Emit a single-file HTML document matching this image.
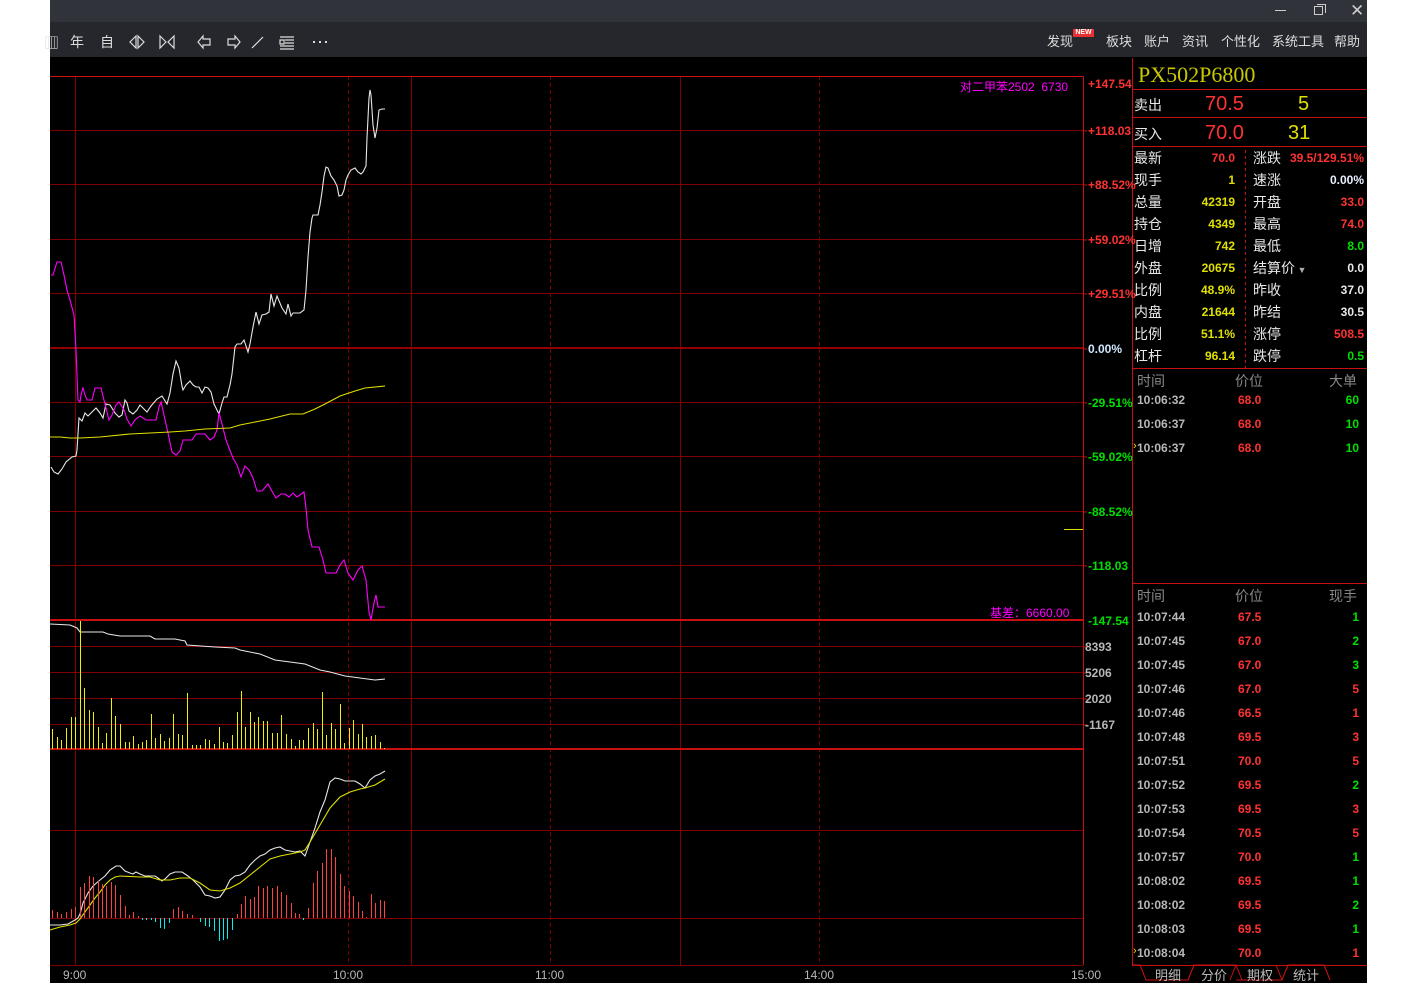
<!DOCTYPE html>
<html><head><meta charset="utf-8"><style>
*{margin:0;padding:0;box-sizing:border-box}
body{width:1416px;height:986px;background:#fff;position:relative;overflow:hidden;font-family:"Liberation Sans","Noto Sans CJK SC",sans-serif}
.a{position:absolute;white-space:nowrap}
.cn{font-family:"Liberation Sans","Noto Sans CJK SC",sans-serif;font-size:14px;color:#e8e8e8}
.b{font-weight:bold;font-size:12px}
.r{color:#ff3232}.y{color:#e0e000}.g{color:#00e000}.w{color:#e8e8e8}.gr{color:#b8b8b8}
</style></head><body>
<div class="a" style="left:50px;top:0;width:1317px;height:22px;background:#303339"></div>
<div class="a" style="left:50px;top:22px;width:1317px;height:35px;background:#25272c"></div>
<div class="a" style="left:50px;top:57px;width:1317px;height:926px;background:#000"></div>
<div class="a" style="left:1275px;top:10px;width:11px;height:1px;background:#ccc"></div>
<div class="a" style="left:1314px;top:6px;width:9px;height:9px;border:1px solid #ccc"></div>
<div class="a" style="left:1317px;top:4px;width:9px;height:9px;border-top:1px solid #ccc;border-right:1px solid #ccc"></div>
<div class="a" style="left:1350px;top:1px;font-size:17px;color:#ccc">✕</div>
<div class="a" style="left:44px;top:32px;font-size:15px;color:#ddd;font-family:'Noto Sans CJK SC',sans-serif">▥</div>
<div class="a cn" style="left:70px;top:32px;color:#ddd">年</div>
<div class="a cn" style="left:100px;top:32px;color:#ddd">自</div>
<svg class="a" style="left:128px;top:33px" width="210" height="18" fill="none" stroke="#ddd" stroke-width="1.2">
<path d="M8 3 L2 9 L8 15 Z M10 3 L16 9 L10 15 Z"/>
<path d="M32 3 L38 9 L32 15 Z M46 3 L40 9 L46 15 Z"/>
<path d="M70 9 L75 3 L75 6 L82 6 L82 12 L75 12 L75 15 Z"/>
<path d="M112 9 L107 3 L107 6 L100 6 L100 12 L107 12 L107 15 Z"/>
<path d="M124 15 L135 4"/>
<path d="M152 4 H166 M157 7 H166 M157 10 H166 M152 13 H166 M152 16 H166 M152 7 H156 V11 H152 Z"/>
<path d="M185 9 h2 M191 9 h2 M197 9 h2" stroke-width="2"/>
</svg>
<div class="a cn" style="left:1047px;top:31px;font-size:13px;color:#ddd">发现</div>
<div class="a" style="left:1073px;top:29px;width:21px;height:8px;background:#e83030;color:#fff;font-size:7px;font-weight:bold;line-height:8px;text-align:center">NEW</div>
<div class="a cn" style="left:1106px;top:31px;font-size:13px;color:#ddd">板块</div>
<div class="a cn" style="left:1144px;top:31px;font-size:13px;color:#ddd">账户</div>
<div class="a cn" style="left:1182px;top:31px;font-size:13px;color:#ddd">资讯</div>
<div class="a cn" style="left:1221px;top:31px;font-size:13px;color:#ddd">个性化</div>
<div class="a cn" style="left:1272px;top:31px;font-size:13px;color:#ddd">系统工具</div>
<div class="a cn" style="left:1334px;top:31px;font-size:13px;color:#ddd">帮助</div>

<svg class="a" style="left:0;top:0" width="1416" height="986" shape-rendering="crispEdges">
<g stroke="#800000" stroke-width="1">
<path d="M50 130.5H1083M50 184.5H1083M50 239.5H1083M50 293.5H1083M50 402.5H1083M50 456.5H1083M50 511.5H1083M50 565.5H1083M50 646.5H1083M50 672.5H1083M50 698.5H1083M50 724.5H1083M50 830.5H1083M50 918.5H1083M50 965.5H1083"/>
<path d="M75.5 76V965M411.5 76V965M680.5 76V965"/>
<path d="M348.5 76V965M550.5 76V965M819.5 76V965" stroke-dasharray="4,3"/>
</g>
<path d="M50 348H1083" stroke="#900000" stroke-width="2"/>
<path d="M50 76.5H1083" stroke="#d01010"/>
<path d="M50 620H1083M50 749H1083" stroke="#c81010" stroke-width="2"/>
<path d="M1083.5 76V965M1132.5 58V965M1132 89.5H1367M1132 117.5H1367M1132 146.5H1367M1132 368.5H1367M1132 583.5H1367M1132 965.5H1367" stroke="#c81010"/>
<path d="M1245.5 150V368" stroke="#c81010" stroke-dasharray="3,3"/>
<path d="M1064 529.5H1083" stroke="#e0e000"/>
<g stroke="#c81010"><path d="M1083 131h4M1083 185h4M1083 240h4M1083 294h4M1083 349h4M1083 403h4M1083 457h4M1083 512h4M1083 566h4M1083 647h4M1083 673h4M1083 699h4M1083 725h4"/></g>
<path d="M1132 965 L1140 965 L1146 980 L1188 980 L1194 965 L1236 965 L1242 980 L1282 980 L1288 965 L1324 965 L1330 980" fill="none" stroke="#c81010" shape-rendering="auto"/>
<path d="M1188 980 L1194 965 M1236 965 L1230 980 M1282 980 L1276 965 M1288 965 L1282 980 M1330 980 L1324 965 M1236 980 L1242 980" fill="none" stroke="#c81010" shape-rendering="auto"/>
<g shape-rendering="auto" fill="none" stroke-width="1.1">
<polyline stroke="#e8e8e8" points="51,467 54,472 58,474 62,469 66,462 72,457 76,456 77,450 79,418 82,421 85,413 88,416 92,412 96,408 100,413 103,418 106,404 110,405 115,413 119,417 122,415 125,400 127,403 129,411 133,414 137,410 140,405 143,408 147,412 151,406 157,399 162,396 167,404 170,393 173,374 176,361 179,368 182,386 183,390 186,385 190,381 193,385 196,387 199,387 202,393 205,387 208,388 211,392 214,404 219,414 222,403 224,397 227,397 230,385 232,374 235,347 237,344 241,344 244,340 248,352 250,344 253,327 256,312 259,324 262,315 266,314 269,312 271,294 274,306 277,296 282,308 286,314 288,304 291,316 293,313 300,313 304,310 306,290 308,257 310,232 312,218 313,215 318,215 320,205 322,192 324,176 326,167 328,168 331,176 334,180 337,186 339,196 342,195 344,190 346,180 348,175 351,170 355,168 358,172 361,174 363,172 366,166 367,138 369,98 370,90 371,95 373,125 375,138 377,128 379,110 382,109 385,109"/>
<polyline stroke="#ff00ff" points="51,275 53,275 57,262 61,262 64,275 67,290 70,300 74,315 76,350 78,400 80,402 81,395 83,388 85,395 87,400 92,400 95,388 101,388 104,400 106,408 109,420 112,415 116,405 119,402 124,410 127,419 131,426 135,420 140,416 146,420 156,420 159,407 161,402 164,415 168,433 172,452 176,455 180,451 183,440 192,440 196,434 205,434 210,440 214,437 217,430 219,413 221,420 226,440 229,448 233,458 237,465 241,477 245,466 249,470 253,478 257,491 262,491 268,484 273,493 276,498 281,494 285,494 289,497 293,493 297,497 304,492 306,508 308,530 312,547 319,547 323,560 326,573 336,573 340,565 344,560 348,573 353,580 358,570 362,566 366,580 369,612 371,620 374,603 376,595 378,607 385,607"/>
<polyline stroke="#e0e000" points="50,437 60,437 70,438 80,438 100,437 130,434 150,433 170,432 185,431 205,429 230,428 240,425 250,423 260,421 270,419 290,414 303,414 315,409 325,404 340,396 355,391 365,388 385,386"/>
<polyline stroke="#e8e8e8" points="50,624 70,625 77,628 80,632 103,632 108,634 120,636 150,636 155,639 175,639 185,641 187,645 215,647 235,648 240,650 260,654 275,660 305,664 320,670 330,672 345,676 360,678 375,680 385,679"/>
<polyline stroke="#e8e8e8" points="50,925 60,925 68,924 75,920 78,918 80,914 83,903 88,893 93,886 100,880 105,876 110,870 116,866 120,866 125,871 130,873 133,874 136,872 140,874 145,876 155,876 158,878 162,881 165,879 170,874 175,872 182,872 188,876 193,880 200,887 205,895 210,896 215,898 220,897 225,890 230,880 235,876 240,875 245,872 250,865 255,860 260,856 265,854 270,850 275,848 280,847 285,850 290,851 295,852 300,851 305,856 310,842 315,828 320,812 325,800 330,782 335,778 340,779 345,781 355,781 360,784 365,788 370,780 375,776 380,774 385,771"/>
<polyline stroke="#e0e000" points="50,930 60,927 70,925 76,923 80,919 85,912 90,905 95,898 100,892 105,885 110,880 115,877 120,876 140,877 150,877 160,880 170,880 180,878 190,878 200,883 210,890 220,891 230,888 240,883 250,875 260,867 270,859 280,856 300,852 305,850 310,842 320,825 330,808 340,797 350,792 360,789 365,788 375,785 385,779"/>
</g>
<g transform="translate(0.5,0)">
<path stroke="#f0f000" d="M52 749v-20M57 749v-12M61 749v-9M66 749v-21M71 749v-32M75 749v-32M80 749v-128M84 749v-61M89 749v-39M93 749v-37M98 749v-22M102 749v-6M106 749v-16M111 749v-51M115 749v-33M120 749v-25M125 749v-7M129 749v-7M133 749v-13M138 749v-5M142 749v-7M146 749v-9M151 749v-35M155 749v-11M160 749v-15M164 749v-8M169 749v-11M173 749v-35M178 749v-15M182 749v-14M187 749v-56M192 749v-4M196 749v-4M200 749v-4M205 749v-10M209 749v-9M214 749v-5M219 749v-22M223 749v-7M227 749v-6M232 749v-14M237 749v-37M241 749v-58M245 749v-22M250 749v-37M254 749v-27M258 749v-32M263 749v-28M267 749v-28M272 749v-16M277 749v-16M281 749v-34M286 749v-15M291 749v-10M295 749v-3M299 749v-9M303 749v-9M308 749v-21M313 749v-26M317 749v-20M322 749v-57M326 749v-14M331 749v-26M335 749v-20M340 749v-45M344 749v-6M349 749v-21M353 749v-29M358 749v-15M362 749v-25M366 749v-12M371 749v-13M375 749v-14M380 749v-7M384 749v-1"/>
<path stroke="#ff4040" d="M52 918v-8M57 918v-6M61 918v-4M66 918v-6M71 918v-9M75 918v-11M80 918v-31M84 918v-35M89 918v-42M93 918v-41M98 918v-37M102 918v-34M106 918v-32M111 918v-36M115 918v-33M120 918v-23M125 918v-12M129 918v-3M133 918v-6M138 918v-2M173 918v-9M178 918v-11M182 918v-7M187 918v-4M192 918v-3M237 918v-4M241 918v-14M245 918v-22M250 918v-19M254 918v-21M258 918v-32M263 918v-30M267 918v-32M272 918v-30M277 918v-32M281 918v-26M286 918v-23M291 918v-15M295 918v-5M299 918v-4M308 918v-10M313 918v-35M317 918v-47M322 918v-55M326 918v-69M331 918v-69M335 918v-61M340 918v-44M344 918v-32M349 918v-27M353 918v-22M358 918v-16M362 918v-7M366 918v-1M371 918v-24M375 918v-15M380 918v-18M384 918v-17"/>
<path stroke="#00f0f0" d="M142 918v2M146 918v2M151 918v2M155 918v4M160 918v10M164 918v11M169 918v5M200 918v4M205 918v8M209 918v9M214 918v13M219 918v23M223 918v22M227 918v21M232 918v12M303 918v2"/>
</g>
</svg>

<div class="a" style="left:960px;top:78px;font-size:12px;color:#ff00ff">对二甲苯2502&nbsp;&nbsp;6730</div>
<div class="a" style="left:990px;top:604px;font-size:12px;color:#ff00ff">基差：6660.00</div>

<div class="a b r" style="left:1088px;top:77px">+147.54</div>
<div class="a b r" style="left:1088px;top:124px">+118.03</div>
<div class="a b r" style="left:1088px;top:178px">+88.52%</div>
<div class="a b r" style="left:1088px;top:233px">+59.02%</div>
<div class="a b r" style="left:1088px;top:287px">+29.51%</div>
<div class="a b" style="left:1088px;top:342px;color:#d0e8ff">0.00%</div>
<div class="a b g" style="left:1088px;top:396px">-29.51%</div>
<div class="a b g" style="left:1088px;top:450px">-59.02%</div>
<div class="a b g" style="left:1088px;top:505px">-88.52%</div>
<div class="a b g" style="left:1088px;top:559px">-118.03</div>
<div class="a b g" style="left:1088px;top:614px">-147.54</div>
<div class="a b gr" style="left:1085px;top:640px">8393</div>
<div class="a b gr" style="left:1085px;top:666px">5206</div>
<div class="a b gr" style="left:1085px;top:692px">2020</div>
<div class="a b gr" style="left:1085px;top:718px">-1167</div>
<div class="a gr" style="left:63px;top:968px;font-size:12px">9:00</div>
<div class="a gr" style="left:333px;top:968px;font-size:12px">10:00</div>
<div class="a gr" style="left:535px;top:968px;font-size:12px">11:00</div>
<div class="a gr" style="left:804px;top:968px;font-size:12px">14:00</div>
<div class="a gr" style="left:1071px;top:968px;font-size:12px">15:00</div>

<div class="a" style="left:1138px;top:62px;font-family:'Liberation Serif',serif;font-size:22px;color:#c8c800">PX502P6800</div>
<div class="a cn" style="left:1134px;top:95px">卖出</div>
<div class="a r" style="left:1205px;top:93px;font-size:20px">70.5</div>
<div class="a y" style="left:1298px;top:93px;font-size:20px">5</div>
<div class="a cn" style="left:1134px;top:124px">买入</div>
<div class="a r" style="left:1205px;top:122px;font-size:20px">70.0</div>
<div class="a y" style="left:1288px;top:122px;font-size:20px">31</div>

<div class="a" style="left:1134px;top:147px;width:101px;line-height:22px">
<div style="position:relative;height:22px"><span class="cn">最新</span><span class="b r" style="position:absolute;right:0">70.0</span></div>
<div style="position:relative;height:22px"><span class="cn">现手</span><span class="b y" style="position:absolute;right:0">1</span></div>
<div style="position:relative;height:22px"><span class="cn">总量</span><span class="b y" style="position:absolute;right:0">42319</span></div>
<div style="position:relative;height:22px"><span class="cn">持仓</span><span class="b y" style="position:absolute;right:0">4349</span></div>
<div style="position:relative;height:22px"><span class="cn">日增</span><span class="b y" style="position:absolute;right:0">742</span></div>
<div style="position:relative;height:22px"><span class="cn">外盘</span><span class="b y" style="position:absolute;right:0">20675</span></div>
<div style="position:relative;height:22px"><span class="cn">比例</span><span class="b y" style="position:absolute;right:0">48.9%</span></div>
<div style="position:relative;height:22px"><span class="cn">内盘</span><span class="b y" style="position:absolute;right:0">21644</span></div>
<div style="position:relative;height:22px"><span class="cn">比例</span><span class="b y" style="position:absolute;right:0">51.1%</span></div>
<div style="position:relative;height:22px"><span class="cn">杠杆</span><span class="b y" style="position:absolute;right:0">96.14</span></div>
</div>
<div class="a" style="left:1253px;top:147px;width:111px;line-height:22px">
<div style="position:relative;height:22px"><span class="cn">涨跌</span><span class="b r" style="position:absolute;right:0">39.5/129.51%</span></div>
<div style="position:relative;height:22px"><span class="cn">速涨</span><span class="b" style="position:absolute;right:0;color:#e8f0ff">0.00%</span></div>
<div style="position:relative;height:22px"><span class="cn">开盘</span><span class="b r" style="position:absolute;right:0">33.0</span></div>
<div style="position:relative;height:22px"><span class="cn">最高</span><span class="b r" style="position:absolute;right:0">74.0</span></div>
<div style="position:relative;height:22px"><span class="cn">最低</span><span class="b g" style="position:absolute;right:0">8.0</span></div>
<div style="position:relative;height:22px"><span class="cn">结算价</span><span style="color:#aaa;font-size:9px"> ▼</span><span class="b w" style="position:absolute;right:0">0.0</span></div>
<div style="position:relative;height:22px"><span class="cn">昨收</span><span class="b w" style="position:absolute;right:0">37.0</span></div>
<div style="position:relative;height:22px"><span class="cn">昨结</span><span class="b w" style="position:absolute;right:0">30.5</span></div>
<div style="position:relative;height:22px"><span class="cn">涨停</span><span class="b r" style="position:absolute;right:0">508.5</span></div>
<div style="position:relative;height:22px"><span class="cn">跌停</span><span class="b g" style="position:absolute;right:0">0.5</span></div>
</div>

<div class="a cn" style="left:1137px;top:371px;color:#888">时间</div>
<div class="a cn" style="left:1235px;top:371px;color:#888">价位</div>
<div class="a cn" style="left:1329px;top:371px;color:#888">大单</div>
<div class="a" style="left:1137px;top:388px;width:222px;line-height:24px">
<div style="position:relative;height:24px"><span class="b gr">10:06:32</span><span class="b r" style="position:absolute;left:101px">68.0</span><span class="b g" style="position:absolute;right:0">60</span></div>
<div style="position:relative;height:24px"><span class="b gr">10:06:37</span><span class="b r" style="position:absolute;left:101px">68.0</span><span class="b g" style="position:absolute;right:0">10</span></div>
<div style="position:relative;height:24px"><span class="b gr">10:06:37</span><span class="b r" style="position:absolute;left:101px">68.0</span><span class="b g" style="position:absolute;right:0">10</span></div>
</div>
<div class="a" style="left:1133px;top:440px;color:#e0e000;font-size:11px">›</div>

<div class="a cn" style="left:1137px;top:586px;color:#888">时间</div>
<div class="a cn" style="left:1235px;top:586px;color:#888">价位</div>
<div class="a cn" style="left:1329px;top:586px;color:#888">现手</div>
<div class="a" style="left:1137px;top:605px;width:222px;line-height:24px">
<div style="position:relative;height:24px"><span class="b gr">10:07:44</span><span class="b r" style="position:absolute;left:101px">67.5</span><span class="b g" style="position:absolute;right:0">1</span></div>
<div style="position:relative;height:24px"><span class="b gr">10:07:45</span><span class="b r" style="position:absolute;left:101px">67.0</span><span class="b g" style="position:absolute;right:0">2</span></div>
<div style="position:relative;height:24px"><span class="b gr">10:07:45</span><span class="b r" style="position:absolute;left:101px">67.0</span><span class="b g" style="position:absolute;right:0">3</span></div>
<div style="position:relative;height:24px"><span class="b gr">10:07:46</span><span class="b r" style="position:absolute;left:101px">67.0</span><span class="b r" style="position:absolute;right:0">5</span></div>
<div style="position:relative;height:24px"><span class="b gr">10:07:46</span><span class="b r" style="position:absolute;left:101px">66.5</span><span class="b r" style="position:absolute;right:0">1</span></div>
<div style="position:relative;height:24px"><span class="b gr">10:07:48</span><span class="b r" style="position:absolute;left:101px">69.5</span><span class="b r" style="position:absolute;right:0">3</span></div>
<div style="position:relative;height:24px"><span class="b gr">10:07:51</span><span class="b r" style="position:absolute;left:101px">70.0</span><span class="b r" style="position:absolute;right:0">5</span></div>
<div style="position:relative;height:24px"><span class="b gr">10:07:52</span><span class="b r" style="position:absolute;left:101px">69.5</span><span class="b g" style="position:absolute;right:0">2</span></div>
<div style="position:relative;height:24px"><span class="b gr">10:07:53</span><span class="b r" style="position:absolute;left:101px">69.5</span><span class="b r" style="position:absolute;right:0">3</span></div>
<div style="position:relative;height:24px"><span class="b gr">10:07:54</span><span class="b r" style="position:absolute;left:101px">70.5</span><span class="b r" style="position:absolute;right:0">5</span></div>
<div style="position:relative;height:24px"><span class="b gr">10:07:57</span><span class="b r" style="position:absolute;left:101px">70.0</span><span class="b g" style="position:absolute;right:0">1</span></div>
<div style="position:relative;height:24px"><span class="b gr">10:08:02</span><span class="b r" style="position:absolute;left:101px">69.5</span><span class="b g" style="position:absolute;right:0">1</span></div>
<div style="position:relative;height:24px"><span class="b gr">10:08:02</span><span class="b r" style="position:absolute;left:101px">69.5</span><span class="b g" style="position:absolute;right:0">2</span></div>
<div style="position:relative;height:24px"><span class="b gr">10:08:03</span><span class="b r" style="position:absolute;left:101px">69.5</span><span class="b g" style="position:absolute;right:0">1</span></div>
<div style="position:relative;height:24px"><span class="b gr">10:08:04</span><span class="b r" style="position:absolute;left:101px">70.0</span><span class="b r" style="position:absolute;right:0">1</span></div>
</div>
<div class="a" style="left:1133px;top:945px;color:#e0e000;font-size:11px">›</div>

<div class="a cn" style="left:1155px;top:965px;font-size:13px;color:#bbb">明细</div>
<div class="a cn" style="left:1201px;top:965px;font-size:13px;color:#bbb">分价</div>
<div class="a cn" style="left:1247px;top:965px;font-size:13px;color:#bbb">期权</div>
<div class="a cn" style="left:1293px;top:965px;font-size:13px;color:#bbb">统计</div>
</body></html>
